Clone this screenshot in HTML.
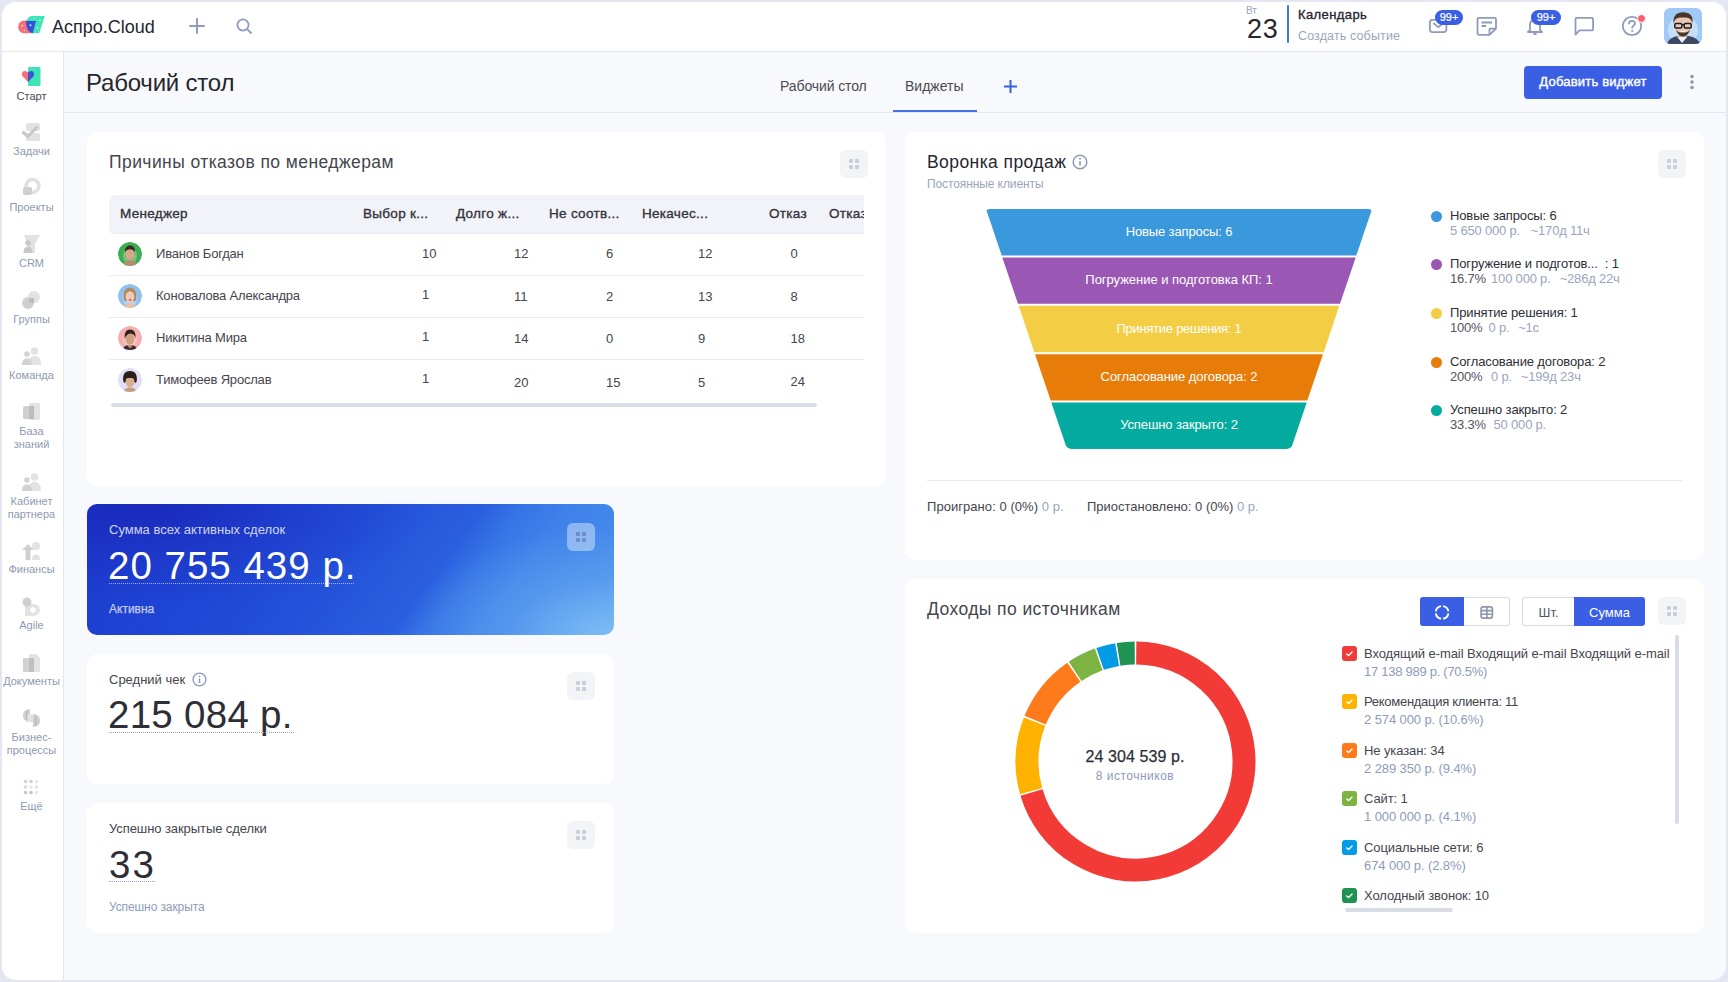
<!DOCTYPE html>
<html><head><meta charset="utf-8">
<style>
*{box-sizing:border-box;margin:0;padding:0}
html,body{width:1728px;height:982px;overflow:hidden;background:#e4e7f1;font-family:"Liberation Sans",sans-serif;color:#333}
.win{position:absolute;left:2px;top:2px;width:1724px;height:978px;border-radius:14px;background:#f8f9fc;overflow:hidden}
.abs{position:absolute}
.pg{position:absolute;left:-2px;top:-2px;width:1728px;height:982px}
.hdr{position:absolute;left:0;top:0;width:1728px;height:52px;background:#fff;border-bottom:1px solid #e3e6ef}
.side{position:absolute;left:0;top:52px;width:64px;height:930px;background:#fff;border-right:1px solid #e3e6ef}
.t{position:absolute;white-space:nowrap;line-height:1}
.card{position:absolute;background:#fff;border-radius:10px}
.drag{position:absolute;width:28px;height:28px;border-radius:6px;background:#f2f4f8}
.drag i{position:absolute;width:4px;height:4px;border-radius:1px;background:#c9cedb}
.navi{position:absolute;left:0;width:63px;text-align:center;font-size:11px;color:#8e99b3;line-height:13px}
</style></head><body>
<div class="win"><div class="pg">

<div class="hdr"></div>
<svg class="abs" style="left:15px;top:12px" width="34" height="24" viewBox="0 0 34 24">
    <path d="M9.6 8.6 H17 V21.3 H9.6 C6 21.3 3.2 18.5 3.2 15 C3.2 11.4 6 8.6 9.6 8.6 Z" fill="#f86e78"/>
    <path d="M12 9.2 C12 6 14.3 3.9 17.5 3.9 H29.8 L24.2 21.3 H17.4 Z" fill="#3ee5b8"/>
    <path d="M11 9 H21 L17.8 21.2 C13.5 20.5 11 16 11 9 Z" fill="#3251d8"/>
    <circle cx="7.2" cy="13.6" r="0.9" fill="#fff" opacity="0.8"/><circle cx="9.4" cy="18.4" r="0.7" fill="#fff" opacity="0.8"/>
    <circle cx="15.5" cy="13.3" r="1.1" fill="#fff" opacity="0.7"/><circle cx="19.4" cy="6.3" r="0.6" fill="#fff" opacity="0.8"/>
    <circle cx="24.8" cy="8.4" r="0.9" fill="#fff" opacity="0.8"/><circle cx="22.5" cy="15.9" r="0.8" fill="#fff" opacity="0.8"/>
  </svg>
<div class="t" style="left:52px;top:18.06px;font-size:18px;color:#26262e;">Аспро.Cloud</div>
<svg class="abs" style="left:189px;top:18px" width="16" height="16" viewBox="0 0 16 16"><path d="M8 1V15M1 8H15" stroke="#8e9bba" stroke-width="2" stroke-linecap="round"/></svg>
<svg class="abs" style="left:236px;top:18px" width="17" height="17" viewBox="0 0 17 17"><circle cx="7" cy="7" r="5.6" fill="none" stroke="#8e9bba" stroke-width="1.8"/><path d="M11.2 11.2L15 15" stroke="#8e9bba" stroke-width="1.8" stroke-linecap="round"/></svg>
<div class="t" style="left:1246px;top:6.04px;font-size:10px;color:#9aa5bd;">Вт</div>
<div class="t" style="left:1247px;top:16.44px;font-size:27px;color:#26262e;letter-spacing:0.8px;">23</div>
<div class="abs" style="left:1287px;top:5px;width:2px;height:38px;background:#3d7bc4;border-radius:1px"></div>
<div class="t" style="left:1298px;top:7.70px;font-size:13px;color:#26262e;letter-spacing:0.4px;-webkit-text-stroke:0.35px #26262e;">Календарь</div>
<div class="t" style="left:1298px;top:29.72px;font-size:12.5px;color:#9aa5bd;letter-spacing:0.13px;">Создать событие</div>
<svg class="abs" style="left:1428px;top:17px" width="22" height="19" viewBox="0 0 22 19"><rect x="1.9" y="2.9" width="16.5" height="12.3" rx="2.6" fill="none" stroke="#8e9bba" stroke-width="1.75"/><path d="M5.3 6 L10.3 10.2 L15 6.4" fill="none" stroke="#8e9bba" stroke-width="1.75"/></svg>
<div class="abs" style="left:1435px;top:10px;width:28px;height:15px;border-radius:8px;background:#3a5fe5;color:#fff;font-size:11px;line-height:15px;text-align:center;-webkit-text-stroke:0.2px #fff">99+</div>
<svg class="abs" style="left:1476px;top:16px" width="22" height="20" viewBox="0 0 22 20"><path d="M3 1.8 H18.5 C19.3 1.8 20 2.5 20 3.3 V12.5 L13.5 18.8 H3 C2.2 18.8 1.5 18.1 1.5 17.3 V3.3 C1.5 2.5 2.2 1.8 3 1.8 Z" fill="none" stroke="#8e9bba" stroke-width="1.8" stroke-linejoin="round"/><path d="M13.5 18.5 V13.5 C13.5 13 13.9 12.6 14.4 12.6 H19.8" fill="none" stroke="#8e9bba" stroke-width="1.8"/><path d="M5.5 6.5 H16 M5.5 10 H10" stroke="#8e9bba" stroke-width="1.8"/></svg>
<svg class="abs" style="left:1526px;top:17px" width="18" height="18" viewBox="0 0 18 18"><path d="M4 13 V8 C4 5 6 3 9 3 C12 3 14 5 14 8 V13 L16 15 H2 Z" fill="none" stroke="#8e9bba" stroke-width="1.8" stroke-linejoin="round"/><path d="M7.5 17 H10.5" stroke="#8e9bba" stroke-width="1.8"/></svg>
<div class="abs" style="left:1531px;top:10px;width:30px;height:15px;border-radius:8px;background:#3a5fe5;color:#fff;font-size:11px;line-height:15px;text-align:center;-webkit-text-stroke:0.2px #fff">99+</div>
<svg class="abs" style="left:1573px;top:16px" width="22" height="20" viewBox="0 0 22 20"><path d="M2.5 18.5 V3 C2.5 2.4 3 1.9 3.6 1.9 H19 C19.6 1.9 20.1 2.4 20.1 3 V13.3 C20.1 13.9 19.6 14.4 19 14.4 H6.5 Z" fill="none" stroke="#8e9bba" stroke-width="1.8" stroke-linejoin="round"/></svg>
<svg class="abs" style="left:1621px;top:15px" width="22" height="22" viewBox="0 0 22 22"><circle cx="11" cy="11" r="9.2" fill="none" stroke="#8e9bba" stroke-width="1.8"/><path d="M8 8.5 C8 6.8 9.3 5.8 11 5.8 C12.7 5.8 14 6.9 14 8.4 C14 10.3 11.2 10.6 11.2 12.7" fill="none" stroke="#8e9bba" stroke-width="1.8" stroke-linecap="round"/><circle cx="11.2" cy="16" r="1.1" fill="#8e9bba"/></svg>
<div class="abs" style="left:1637.3px;top:13.9px;width:9px;height:9px;border-radius:50%;background:#f7606d;border:1.6px solid #fff"></div>
<div class="abs" style="left:1664px;top:8px;width:38px;height:36px;border-radius:6px;overflow:hidden;background:#9fc9f6">
  <svg width="38" height="36" viewBox="0 0 38 36">
    <ellipse cx="19" cy="22" rx="15" ry="14" fill="#cfe4f8" opacity="0.8"/>
    <path d="M3 36 C5 30 10 28.5 15 28 L24 28 C29 28.5 34 30.5 36 36 Z" fill="#3c4862"/>
    <path d="M13 28.5 L18 35 L23.5 28.5 Z" fill="#eef2f6"/>
    <rect x="15" y="24" width="8" height="5" fill="#d9a78e"/>
    <path d="M10.5 14 C10.5 22 13.5 28.5 19 28.5 C24.5 28.5 27.5 22 27.5 14 C27.5 10 24 8 19 8 C14 8 10.5 10 10.5 14 Z" fill="#eac6b2"/>
    <path d="M12 21 C13 26 16 28.6 19 28.6 C22 28.6 25 26 26 21 C25 24 22 24.5 19 24.5 C16 24.5 13 24 12 21 Z" fill="#4b3a30"/>
    <path d="M9.5 15 C9 8 12.5 4.2 19 4.2 C25.5 4.2 29.5 7.5 28.5 15 L27.3 12.5 C26.5 10 23 9.5 19 9.5 C15 9.5 11.5 10 10.8 12.5 Z" fill="#4a3428"/>
    <rect x="10.8" y="15.4" width="7" height="4.6" rx="1.2" fill="none" stroke="#1e1e22" stroke-width="1.5"/>
    <rect x="20.2" y="15.4" width="7" height="4.6" rx="1.2" fill="none" stroke="#1e1e22" stroke-width="1.5"/>
    <path d="M17.8 16.6 H20.2" stroke="#1e1e22" stroke-width="1.2"/>
    <path d="M16.5 23 C18 23.8 20 23.8 21.5 23" stroke="#fff" stroke-width="0.9" fill="none"/>
  </svg>
</div>
<div class="side"></div>
<!-- sidebar items -->
<svg class="abs" style="left:21px;top:66px" width="20" height="20" viewBox="0 0 20 20">
  <rect x="7" y="1" width="12.5" height="19" rx="1.2" fill="#3ee3b6"/>
  <path d="M7 16 L1.8 10.6 C0.2 9 0.6 5 3.6 4.9 C5.2 4.8 6.3 5.6 7 6.6 Z" fill="#f6707a"/>
  <path d="M7 16 L12.2 10.6 C13.8 9 13.4 5 10.4 4.9 C8.8 4.8 7.7 5.6 7 6.6 Z" fill="#3a55d6"/>
</svg>
<div class="navi" style="top:90px;color:#4a4a52">Старт</div>

<svg class="abs" style="left:21px;top:122px" width="20" height="20" viewBox="0 0 20 20">
  <rect x="5" y="1" width="14" height="8" rx="2" fill="#e2e2e2"/><rect x="5" y="11" width="14" height="8" rx="2" fill="#e2e2e2"/>
  <path d="M2.5 10.5 L7 14.5 L15.5 5.5" fill="none" stroke="#c8c8c8" stroke-width="3.2" stroke-linecap="round" stroke-linejoin="round"/>
</svg>
<div class="navi" style="top:145px">Задачи</div>

<svg class="abs" style="left:21px;top:178px" width="20" height="20" viewBox="0 0 20 20">
  <circle cx="11.5" cy="8" r="6.5" fill="none" stroke="#e0e0e0" stroke-width="3.5"/>
  <rect x="2" y="9" width="9" height="8" rx="2" fill="#cfcfcf"/>
</svg>
<div class="navi" style="top:201px">Проекты</div>

<svg class="abs" style="left:21px;top:234px" width="20" height="20" viewBox="0 0 20 20">
  <path d="M3 1 H19 L14 10 V19 H6 V10 Z" fill="#e2e2e2"/>
  <circle cx="7" cy="9" r="2.7" fill="#c8c8c8"/><path d="M2.5 19 C2.5 14 4.5 12.8 7 12.8 C9.5 12.8 11.5 14 11.5 19 Z" fill="#c8c8c8"/>
</svg>
<div class="navi" style="top:257px">CRM</div>

<svg class="abs" style="left:21px;top:290px" width="20" height="20" viewBox="0 0 20 20">
  <circle cx="13" cy="7" r="6" fill="#e3e3e3"/><circle cx="7" cy="13" r="6" fill="#d0d0d0"/>
  <rect x="8" y="8" width="5" height="5" fill="#bdbdbd"/>
</svg>
<div class="navi" style="top:313px">Группы</div>

<svg class="abs" style="left:21px;top:346px" width="20" height="20" viewBox="0 0 20 20">
  <circle cx="13.5" cy="5" r="3.8" fill="#e3e3e3"/><path d="M7 19 C7 12 10 10 13.5 10 C17 10 20 12 20 19 Z" fill="#e3e3e3"/>
  <circle cx="6" cy="8" r="2.8" fill="#d2d2d2"/><path d="M1 19 C1 14 3 12.5 6 12.5 C9 12.5 11 14 11 19 Z" fill="#d2d2d2"/>
</svg>
<div class="navi" style="top:369px">Команда</div>

<svg class="abs" style="left:21px;top:402px" width="20" height="20" viewBox="0 0 20 20">
  <rect x="8" y="1" width="11" height="17" rx="1.5" fill="#e3e3e3"/><rect x="2" y="4" width="11" height="13" rx="1.5" fill="#d0d0d0"/>
  <rect x="8" y="4" width="5" height="13" fill="#bdbdbd"/>
</svg>
<div class="navi" style="top:425px">База<br>знаний</div>

<svg class="abs" style="left:21px;top:472px" width="20" height="20" viewBox="0 0 20 20">
  <circle cx="13.5" cy="5" r="3.8" fill="#e3e3e3"/><path d="M7 19 C7 12 10 10 13.5 10 C17 10 20 12 20 19 Z" fill="#e3e3e3"/>
  <circle cx="6" cy="8" r="2.8" fill="#d2d2d2"/><path d="M1 19 C1 14 3 12.5 6 12.5 C9 12.5 11 14 11 19 Z" fill="#d2d2d2"/>
</svg>
<div class="navi" style="top:495px">Кабинет<br>партнера</div>

<svg class="abs" style="left:21px;top:541px" width="20" height="20" viewBox="0 0 20 20">
  <circle cx="15" cy="5" r="4" fill="#e3e3e3"/><path d="M11 19 C11 15 12.5 13.5 15 13.5 C17.5 13.5 19 15 19 19 Z" fill="#e3e3e3"/>
  <path d="M7 3 L13 9 H9.5 V19 H4.5 V9 H1 Z" fill="#cfcfcf"/>
</svg>
<div class="navi" style="top:563px">Финансы</div>

<svg class="abs" style="left:21px;top:597px" width="20" height="20" viewBox="0 0 20 20">
  <path d="M4 7 H12 C16 7 19 9.5 19 13 C19 16.5 16 19 12 19 H4 Z" fill="#e3e3e3"/><circle cx="12" cy="13" r="2.8" fill="#fff"/>
  <circle cx="6" cy="5" r="4.5" fill="#cfcfcf"/>
</svg>
<div class="navi" style="top:619px">Agile</div>

<svg class="abs" style="left:21px;top:653px" width="20" height="20" viewBox="0 0 20 20">
  <path d="M8 1 H15 L19 5 V19 H8 Z" fill="#e3e3e3"/><rect x="2" y="5" width="11" height="14" rx="1" fill="#d2d2d2"/>
  <rect x="8" y="5" width="5" height="14" fill="#bfbfbf"/>
</svg>
<div class="navi" style="top:675px">Документы</div>

<svg class="abs" style="left:21px;top:708px" width="20" height="20" viewBox="0 0 20 20">
  <path d="M9 1 C4 1 2 4 2 7.5 C2 11 4 14 9 14 Z" fill="#d0d0d0"/>
  <rect x="6" y="6" width="9" height="8" rx="3" fill="#e3e3e3"/>
  <path d="M12 6 C17 6 19 9 19 12.5 C19 16 17 19 12 19 Z" fill="#cfcfcf"/>
  <rect x="5" y="3" width="1.3" height="9" fill="#b9b9b9"/><rect x="14" y="8" width="1.3" height="9" fill="#b9b9b9"/>
</svg>
<div class="navi" style="top:731px">Бизнес-<br>процессы</div>

<svg class="abs" style="left:23px;top:779px" width="16" height="16" viewBox="0 0 16 16">
  <circle cx="2.5" cy="2.5" r="1.8" fill="#d4d4d4"/><circle cx="8" cy="2.5" r="1.8" fill="#cfcfcf"/><circle cx="13.5" cy="2.5" r="1.8" fill="#e6e6e6"/>
  <circle cx="2.5" cy="8" r="1.8" fill="#d8d8d8"/><circle cx="8" cy="8" r="1.8" fill="#e6e6e6"/><circle cx="13.5" cy="8" r="1.8" fill="#e2e2e2"/>
  <circle cx="2.5" cy="13.5" r="1.8" fill="#c4c4c4"/><circle cx="8" cy="13.5" r="1.8" fill="#c4c4c4"/><circle cx="13.5" cy="13.5" r="1.8" fill="#e6e6e6"/>
</svg>
<div class="navi" style="top:800px">Ещё</div>


<div class="abs" style="left:64px;top:112px;width:1664px;height:1px;background:#e3e6ef"></div>
<div class="t" style="left:86px;top:70.78px;font-size:24px;color:#26262e;letter-spacing:-0.2px;">Рабочий стол</div>
<div class="t" style="left:780px;top:79.35px;font-size:14px;color:#4a4a52;letter-spacing:-0.1px;">Рабочий стол</div>
<div class="t" style="left:905px;top:79.35px;font-size:14px;color:#4a4a52;">Виджеты</div>
<div class="abs" style="left:893px;top:110px;width:84px;height:2px;background:#4a6fe6"></div>
<svg class="abs" style="left:1003px;top:79px" width="15" height="15" viewBox="0 0 15 15"><path d="M7.5 1V14M1 7.5H14" stroke="#3a5fe5" stroke-width="2"/></svg>
<div class="abs" style="left:1524px;top:66px;width:138px;height:33px;border-radius:4px;background:#3a5fe5"></div>
<div class="t" style="left:1524px;top:75.00px;font-size:13px;color:#fff;letter-spacing:0.2px;width:138px;text-align:center;-webkit-text-stroke:0.4px #fff;">Добавить виджет</div>
<svg class="abs" style="left:1688px;top:74px" width="8" height="16" viewBox="0 0 8 16"><circle cx="4" cy="2.5" r="1.8" fill="#8e97ab"/><circle cx="4" cy="8" r="1.8" fill="#8e97ab"/><circle cx="4" cy="13.5" r="1.8" fill="#8e97ab"/></svg>
<div class="card" style="left:87px;top:132px;width:799px;height:354px"></div>
<div class="t" style="left:109px;top:154.09px;font-size:17.5px;color:#45454d;letter-spacing:0.42px;">Причины отказов по менеджерам</div>
<div class="drag" style="left:840px;top:150px;"><i style="left:9px;top:9px;"></i><i style="left:15px;top:9px;"></i><i style="left:9px;top:15px;"></i><i style="left:15px;top:15px;"></i></div>
<div class="abs" style="left:109px;top:195px;width:755px;height:39px;background:#f2f3f8;border-radius:6px 0 0 6px;border-bottom:1px solid #eaecf3"></div>
<div class="t" style="left:120px;top:206.67px;font-size:13.5px;color:#33333b;letter-spacing:0.3px;-webkit-text-stroke:0.35px #33333b;">Менеджер</div>
<div class="t" style="left:363px;top:206.67px;font-size:13.5px;color:#33333b;letter-spacing:0.3px;-webkit-text-stroke:0.35px #33333b;">Выбор к...</div>
<div class="t" style="left:456px;top:206.67px;font-size:13.5px;color:#33333b;letter-spacing:0.3px;-webkit-text-stroke:0.35px #33333b;">Долго ж...</div>
<div class="t" style="left:549px;top:206.67px;font-size:13.5px;color:#33333b;letter-spacing:0.3px;-webkit-text-stroke:0.35px #33333b;">Не соотв...</div>
<div class="t" style="left:642px;top:206.67px;font-size:13.5px;color:#33333b;letter-spacing:0.3px;-webkit-text-stroke:0.35px #33333b;">Некачес...</div>
<div class="t" style="left:769px;top:206.67px;font-size:13.5px;color:#33333b;letter-spacing:0.3px;-webkit-text-stroke:0.35px #33333b;">Отказ</div>
<div class="abs" style="left:829px;top:195px;width:35px;height:38px;overflow:hidden">
<div class="t" style="left:0px;top:11.67px;font-size:13.5px;color:#33333b;letter-spacing:0.3px;-webkit-text-stroke:0.35px #33333b;">Отказ</div>
</div>
<div class="abs" style="left:109px;top:275px;width:755px;height:1px;background:#e6e9f1"></div>
<div class="abs" style="left:109px;top:317px;width:755px;height:1px;background:#e6e9f1"></div>
<div class="abs" style="left:109px;top:359px;width:755px;height:1px;background:#e6e9f1"></div>
<div class="abs" style="left:111px;top:403px;width:706px;height:4px;border-radius:2px;background:#d9dde7"></div>
<svg class="abs" style="left:118px;top:242px" width="24" height="24" viewBox="0 0 24 24"><clipPath id="av0"><circle cx="12" cy="12" r="12"/></clipPath><g clip-path="url(#av0)"><circle cx="12" cy="12" r="12" fill="#3aae52"/><ellipse cx="12" cy="14" rx="7" ry="9" fill="#8fd39c" opacity="0.6"/><path d="M5 24 C6 19.5 8.5 18.5 12 18.5 C15.5 18.5 18 19.5 19 24 Z" fill="#b98b70"/><ellipse cx="11.8" cy="12.2" rx="4.6" ry="6" fill="#d6a887"/><path d="M7 10.5 C6.6 5.8 9 3.6 12 3.6 C15.2 3.6 17.4 5.8 16.8 10.5 C16 8 14 7.2 12 7.2 C10 7.2 7.8 8 7 10.5 Z" fill="#3a2a22"/></g></svg>
<div class="t" style="left:156px;top:246.50px;font-size:13px;color:#45454d;letter-spacing:-0.2px;">Иванов Богдан</div>
<svg class="abs" style="left:118px;top:284px" width="24" height="24" viewBox="0 0 24 24"><clipPath id="av1"><circle cx="12" cy="12" r="12"/></clipPath><g clip-path="url(#av1)"><circle cx="12" cy="12" r="12" fill="#90c2f0"/><ellipse cx="12" cy="14" rx="7" ry="9" fill="#cfe3f7" opacity="0.6"/><path d="M5.5 24 C6.5 20 9 19 12 19 C15 19 17.5 20 18.5 24 Z" fill="#e6c2ad"/><path d="M5.8 14 C5 7 8 3.4 12 3.4 C16 3.4 19 7 18.2 14 C18 17 16.5 18 15.5 17 L8.5 17 C7.5 18 6 17 5.8 14 Z" fill="#b08a62"/><ellipse cx="12" cy="12.8" rx="4.3" ry="5.6" fill="#efcbb8"/><ellipse cx="12.2" cy="16" rx="1.6" ry="0.9" fill="#f25c6e"/></g></svg>
<div class="t" style="left:156px;top:288.50px;font-size:13px;color:#45454d;letter-spacing:-0.2px;">Коновалова Александра</div>
<svg class="abs" style="left:118px;top:326px" width="24" height="24" viewBox="0 0 24 24"><clipPath id="av2"><circle cx="12" cy="12" r="12"/></clipPath><g clip-path="url(#av2)"><circle cx="12" cy="12" r="12" fill="#f6aeb0"/><ellipse cx="12" cy="14" rx="7" ry="9" fill="#fbd2d2" opacity="0.5"/><path d="M4.5 24 C5.5 20 8.5 19 12 19 C15.5 19 18.5 20 19.5 24 Z" fill="#3a2e36"/><path d="M9 19 L12 22.5 L15 19 Z" fill="#c49274"/><ellipse cx="12" cy="12.8" rx="4.4" ry="5.8" fill="#cf9f82"/><path d="M6.8 13 C6 6.5 8.5 3.4 12 3.4 C15.8 3.4 18.2 6.5 17.4 12 C16.6 9 15.5 7.8 12.5 7.4 C9.5 7.8 7.6 9.5 6.8 13 Z" fill="#2e221c"/></g></svg>
<div class="t" style="left:156px;top:330.50px;font-size:13px;color:#45454d;letter-spacing:-0.2px;">Никитина Мира</div>
<svg class="abs" style="left:118px;top:368px" width="24" height="24" viewBox="0 0 24 24"><clipPath id="av3"><circle cx="12" cy="12" r="12"/></clipPath><g clip-path="url(#av3)"><circle cx="12" cy="12" r="12" fill="#e2ddf8"/><path d="M5.5 24 C6.5 20.5 9 19.5 12 19.5 C15 19.5 17.5 20.5 18.5 24 Z" fill="#c89c80"/><path d="M5.2 12.5 C4.5 6 7.5 3 12 3 C16.5 3 19.5 6 18.8 12.5 C18.5 15 17 15.5 16.5 14 L7.5 14 C7 15.5 5.5 15 5.2 12.5 Z" fill="#2a1e18"/><ellipse cx="12" cy="13.5" rx="4.4" ry="5.6" fill="#d9ae92"/><path d="M7.6 11 C8.5 8 10 7.5 12 7.5 C14 7.5 15.5 8 16.4 11 C15 9.8 9 9.8 7.6 11 Z" fill="#2a1e18"/></g></svg>
<div class="t" style="left:156px;top:372.50px;font-size:13px;color:#45454d;letter-spacing:-0.2px;">Тимофеев Ярослав</div>
<div class="t" style="left:422px;top:246.60px;font-size:13px;color:#45454d;">10</div>
<div class="t" style="left:514px;top:246.60px;font-size:13px;color:#45454d;">12</div>
<div class="t" style="left:606px;top:246.60px;font-size:13px;color:#45454d;">6</div>
<div class="t" style="left:698px;top:246.60px;font-size:13px;color:#45454d;">12</div>
<div class="t" style="left:790.5px;top:246.60px;font-size:13px;color:#45454d;">0</div>
<div class="t" style="left:422px;top:287.60px;font-size:13px;color:#45454d;">1</div>
<div class="t" style="left:514px;top:290.10px;font-size:13px;color:#45454d;">11</div>
<div class="t" style="left:606px;top:290.10px;font-size:13px;color:#45454d;">2</div>
<div class="t" style="left:698px;top:290.10px;font-size:13px;color:#45454d;">13</div>
<div class="t" style="left:790.5px;top:290.10px;font-size:13px;color:#45454d;">8</div>
<div class="t" style="left:422px;top:329.60px;font-size:13px;color:#45454d;">1</div>
<div class="t" style="left:514px;top:332.10px;font-size:13px;color:#45454d;">14</div>
<div class="t" style="left:606px;top:332.10px;font-size:13px;color:#45454d;">0</div>
<div class="t" style="left:698px;top:332.10px;font-size:13px;color:#45454d;">9</div>
<div class="t" style="left:790.5px;top:332.10px;font-size:13px;color:#45454d;">18</div>
<div class="t" style="left:422px;top:371.60px;font-size:13px;color:#45454d;">1</div>
<div class="t" style="left:514px;top:376.10px;font-size:13px;color:#45454d;">20</div>
<div class="t" style="left:606px;top:376.10px;font-size:13px;color:#45454d;">15</div>
<div class="t" style="left:698px;top:376.10px;font-size:13px;color:#45454d;">5</div>
<div class="t" style="left:790.5px;top:374.60px;font-size:13px;color:#45454d;">24</div>
<div class="card" style="left:87px;top:504px;width:527px;height:131px;overflow:hidden;background:radial-gradient(ellipse 210px 110px at 100% 100%,rgba(125,190,245,1) 0%,rgba(125,190,245,0.32) 50%,rgba(125,190,245,0) 100%),radial-gradient(ellipse 280px 100px at 12% 0%,rgba(24,30,176,0.65) 0%,rgba(24,30,176,0.25) 50%,rgba(24,30,176,0) 100%),linear-gradient(126deg,#1c3acd 0%,#1f46d5 28%,#2350d9 46%,#2a5fdf 64%,#3574e5 70%,#3e82ea 78%,#4a90ec 100%)"></div>
<div class="t" style="left:109px;top:522.90px;font-size:13px;color:rgba(255,255,255,0.8);">Сумма всех активных сделок</div>
<div class="t" style="left:108px;top:546.51px;font-size:38.5px;color:#fff;letter-spacing:1.0px;">20 755 439 р.</div>
<div class="abs" style="left:109px;top:583px;width:245px;height:0;border-top:1px dotted rgba(255,255,255,0.6)"></div>
<div class="t" style="left:109px;top:602.84px;font-size:12px;color:rgba(255,255,255,0.68);-webkit-text-stroke:0.25px rgba(255,255,255,0.68);">Активна</div>
<div class="drag" style="left:567px;top:523px;background:rgba(255,255,255,0.4);"><i style="left:9px;top:9px;background:#6f8cc8"></i><i style="left:15px;top:9px;background:#6f8cc8"></i><i style="left:9px;top:15px;background:#6f8cc8"></i><i style="left:15px;top:15px;background:#6f8cc8"></i></div>
<div class="card" style="left:87px;top:654px;width:527px;height:130px"></div>
<div class="t" style="left:109px;top:672.70px;font-size:13px;color:#45454d;">Средний чек</div>
<svg class="abs" style="left:192px;top:672px" width="15" height="15" viewBox="0 0 15 15"><circle cx="7.5" cy="7.5" r="6.4" fill="none" stroke="#8e9bba" stroke-width="1.4"/><path d="M7.5 6.5V11" stroke="#8e9bba" stroke-width="1.5"/><circle cx="7.5" cy="4.3" r="0.9" fill="#8e9bba"/></svg>
<div class="t" style="left:108px;top:695.51px;font-size:38.5px;color:#2e2e36;letter-spacing:0.27px;">215 084 р.</div>
<div class="abs" style="left:109px;top:732px;width:185px;height:0;border-top:1px dotted #9aa5bd"></div>
<div class="drag" style="left:567px;top:672px;"><i style="left:9px;top:9px;"></i><i style="left:15px;top:9px;"></i><i style="left:9px;top:15px;"></i><i style="left:15px;top:15px;"></i></div>
<div class="card" style="left:87px;top:803px;width:527px;height:130px"></div>
<div class="t" style="left:109px;top:822.00px;font-size:13px;color:#45454d;letter-spacing:-0.08px;">Успешно закрытые сделки</div>
<div class="t" style="left:109px;top:845.61px;font-size:38.5px;color:#2e2e36;letter-spacing:2px;">33</div>
<div class="abs" style="left:109px;top:881px;width:46px;height:0;border-top:1px dotted #9aa5bd"></div>
<div class="t" style="left:109px;top:901.34px;font-size:12px;color:#8e9bba;letter-spacing:-0.1px;">Успешно закрыта</div>
<div class="drag" style="left:567px;top:821px;"><i style="left:9px;top:9px;"></i><i style="left:15px;top:9px;"></i><i style="left:9px;top:15px;"></i><i style="left:15px;top:15px;"></i></div>
<div class="card" style="left:905px;top:132px;width:799px;height:428px"></div>
<div class="t" style="left:927px;top:154.39px;font-size:17.5px;color:#26262e;letter-spacing:0.42px;">Воронка продаж</div>
<svg class="abs" style="left:1072px;top:154px" width="16" height="16" viewBox="0 0 16 16"><circle cx="8" cy="8" r="6.8" fill="none" stroke="#8e9bba" stroke-width="1.5"/><path d="M8 7V11.5" stroke="#8e9bba" stroke-width="1.6"/><circle cx="8" cy="4.7" r="1" fill="#8e9bba"/></svg>
<div class="t" style="left:927px;top:178.14px;font-size:12px;color:#9aa5bd;letter-spacing:-0.1px;">Постоянные клиенты</div>
<div class="drag" style="left:1658px;top:150px;"><i style="left:9px;top:9px;"></i><i style="left:15px;top:9px;"></i><i style="left:9px;top:15px;"></i><i style="left:15px;top:15px;"></i></div>
<svg class="abs" style="left:980px;top:205px" width="400" height="250" viewBox="980 205 400 250">
<path d="M990.0 209.0 L1368.0 209.0 Q1373.0 209.0 1370.7 213.0 L1356.3 255.4 L1001.7 255.4 L987.4 213.0 Q985.0 209.0 990.0 209.0 Z" fill="#3a98dc"/>
<path d="M1002.3 257.4 L1355.7 257.4 L1340.0 303.8 L1018.0 303.8 Z" fill="#9a57b4"/>
<path d="M1018.7 305.8 L1339.3 305.8 L1323.7 352.2 L1034.3 352.2 Z" fill="#f3cd44"/>
<path d="M1035.0 354.2 L1323.0 354.2 L1307.3 400.6 L1050.7 400.6 Z" fill="#e77c08"/>
<path d="M1051.3 402.6 L1306.7 402.6 L1292.0 446.0 Q1290.0 449.0 1287.0 449.0 L1071.0 449.0 Q1068.0 449.0 1066.0 446.0 Z" fill="#06ab9f"/>
</svg>
<div class="t" style="left:979px;top:224.80px;font-size:13px;color:#fff;letter-spacing:-0.13px;width:400px;text-align:center;">Новые запросы: 6</div>
<div class="t" style="left:979px;top:273.20px;font-size:13px;color:#fff;letter-spacing:-0.03px;width:400px;text-align:center;">Погружение и подготовка КП: 1</div>
<div class="t" style="left:979px;top:321.60px;font-size:13px;color:#fff;letter-spacing:-0.27px;width:400px;text-align:center;">Принятие решения: 1</div>
<div class="t" style="left:979px;top:370.00px;font-size:13px;color:#fff;letter-spacing:-0.07px;width:400px;text-align:center;">Согласование договора: 2</div>
<div class="t" style="left:979px;top:418.40px;font-size:13px;color:#fff;letter-spacing:-0.11px;width:400px;text-align:center;">Успешно закрыто: 2</div>
<div class="abs" style="left:1431px;top:210.7px;width:11px;height:11px;border-radius:50%;background:#3a98dc"></div>
<div class="t" style="left:1450px;top:208.80px;font-size:13px;color:#2e2e36;letter-spacing:-0.13px;">Новые запросы: 6</div>
<div class="t" style="left:1450px;top:223.80px;font-size:13px;color:#9aa5bd;letter-spacing:-0.2px;">5 650 000 р.</div>
<div class="t" style="left:1530.7px;top:223.80px;font-size:13px;color:#9aa5bd;letter-spacing:-0.2px;">~170д 11ч</div>
<div class="abs" style="left:1431px;top:259.3px;width:11px;height:11px;border-radius:50%;background:#9a57b4"></div>
<div class="t" style="left:1450px;top:257.40px;font-size:13px;color:#2e2e36;letter-spacing:-0.13px;">Погружение и подготов...&nbsp;&nbsp;: 1</div>
<div class="t" style="left:1450px;top:272.40px;font-size:13px;color:#55555d;letter-spacing:-0.2px;">16.7%</div>
<div class="t" style="left:1491.1px;top:272.40px;font-size:13px;color:#9aa5bd;letter-spacing:-0.2px;">100 000 р.</div>
<div class="t" style="left:1559.7px;top:272.40px;font-size:13px;color:#9aa5bd;letter-spacing:-0.2px;">~286д 22ч</div>
<div class="abs" style="left:1431px;top:307.9px;width:11px;height:11px;border-radius:50%;background:#f3cd44"></div>
<div class="t" style="left:1450px;top:306.00px;font-size:13px;color:#2e2e36;letter-spacing:-0.13px;">Принятие решения: 1</div>
<div class="t" style="left:1450px;top:321.00px;font-size:13px;color:#55555d;letter-spacing:-0.2px;">100%</div>
<div class="t" style="left:1488.6px;top:321.00px;font-size:13px;color:#9aa5bd;letter-spacing:-0.2px;">0 р.</div>
<div class="t" style="left:1518.2px;top:321.00px;font-size:13px;color:#9aa5bd;letter-spacing:-0.2px;">~1с</div>
<div class="abs" style="left:1431px;top:356.5px;width:11px;height:11px;border-radius:50%;background:#e77c08"></div>
<div class="t" style="left:1450px;top:354.60px;font-size:13px;color:#2e2e36;letter-spacing:-0.13px;">Согласование договора: 2</div>
<div class="t" style="left:1450px;top:369.60px;font-size:13px;color:#55555d;letter-spacing:-0.2px;">200%</div>
<div class="t" style="left:1491.1px;top:369.60px;font-size:13px;color:#9aa5bd;letter-spacing:-0.2px;">0 р.</div>
<div class="t" style="left:1520.8px;top:369.60px;font-size:13px;color:#9aa5bd;letter-spacing:-0.2px;">~199д 23ч</div>
<div class="abs" style="left:1431px;top:405.1px;width:11px;height:11px;border-radius:50%;background:#06ab9f"></div>
<div class="t" style="left:1450px;top:403.20px;font-size:13px;color:#2e2e36;letter-spacing:-0.13px;">Успешно закрыто: 2</div>
<div class="t" style="left:1450px;top:418.20px;font-size:13px;color:#55555d;letter-spacing:-0.2px;">33.3%</div>
<div class="t" style="left:1493.6px;top:418.20px;font-size:13px;color:#9aa5bd;letter-spacing:-0.2px;">50 000 р.</div>
<div class="abs" style="left:927px;top:480px;width:755px;height:1px;background:#e6e9f1"></div>
<div class="t" style="left:927px;top:500.00px;font-size:13px;color:#45454d;letter-spacing:0.05px;">Проиграно: 0 (0%) <span style="color:#9aa5bd">0 р.</span></div>
<div class="t" style="left:1087px;top:500.00px;font-size:13px;color:#45454d;">Приостановлено: 0 (0%) <span style="color:#9aa5bd">0 р.</span></div>
<div class="card" style="left:905px;top:579px;width:799px;height:354px;overflow:hidden"></div>
<div class="t" style="left:927px;top:601.19px;font-size:17.5px;color:#45454d;letter-spacing:0.42px;">Доходы по источникам</div>
<div class="abs" style="left:1420px;top:597px;width:45px;height:29px;background:#3a5fe5;border-radius:3px 0 0 3px"></div>
<svg class="abs" style="left:1434px;top:604px" width="16" height="16" viewBox="0 0 16 16"><path d="M14.42 9.40A6.4 6.4 0 0 1 9.10 14.72M7.10 14.72A6.4 6.4 0 0 1 1.78 9.40M1.78 7.40A6.4 6.4 0 0 1 7.10 2.08M9.10 2.08A6.4 6.4 0 0 1 14.42 7.40" fill="none" stroke="#fff" stroke-width="1.9" stroke-linecap="butt"/></svg>
<div class="abs" style="left:1464px;top:597px;width:46px;height:29px;border:1px solid #d8dce6;border-left:0;border-radius:0 3px 3px 0;background:#fff"></div>
<svg class="abs" style="left:1479px;top:605px" width="16" height="15" viewBox="0 0 16 15"><rect x="2.1" y="1.9" width="11.3" height="11.2" rx="2" fill="none" stroke="#8e97ab" stroke-width="1.7"/><path d="M2 5.6H13.5M2 9.3H13.5M7.9 2V13" stroke="#8e97ab" stroke-width="1.6"/></svg>
<div class="abs" style="left:1522px;top:597px;width:53px;height:29px;border:1px solid #d8dce6;border-right:0;border-radius:3px 0 0 3px;background:#fff"></div>
<div class="abs" style="left:1574px;top:597px;width:71px;height:29px;background:#3a5fe5;border-radius:0 3px 3px 0"></div>
<div class="t" style="left:1522px;top:605.50px;font-size:13px;color:#55555d;width:53px;text-align:center;">Шт.</div>
<div class="t" style="left:1574px;top:605.50px;font-size:13px;color:#fff;width:71px;text-align:center;">Сумма</div>
<div class="drag" style="left:1658px;top:597px;"><i style="left:9px;top:9px;"></i><i style="left:15px;top:9px;"></i><i style="left:9px;top:15px;"></i><i style="left:15px;top:15px;"></i></div>
<svg class="abs" style="left:1005px;top:631px" width="261" height="261" viewBox="0 0 261 261">
<path d="M131.26 22.00 A108.5 108.5 0 1 1 26.52 161.50" fill="none" stroke="#f23b36" stroke-width="23"/>
<path d="M26.10 160.04 A108.5 108.5 0 0 1 29.59 90.63" fill="none" stroke="#ffb300" stroke-width="23"/>
<path d="M30.16 89.22 A108.5 108.5 0 0 1 68.89 41.19" fill="none" stroke="#ff7a1a" stroke-width="23"/>
<path d="M70.14 40.34 A108.5 108.5 0 0 1 93.68 28.44" fill="none" stroke="#7cb342" stroke-width="23"/>
<path d="M95.10 27.94 A108.5 108.5 0 0 1 112.11 23.57" fill="none" stroke="#039be5" stroke-width="23"/>
<path d="M113.60 23.32 A108.5 108.5 0 0 1 129.74 22.00" fill="none" stroke="#1f9452" stroke-width="23"/>
</svg>
<div class="t" style="left:1035px;top:748.76px;font-size:16px;color:#2e2e36;letter-spacing:0.1px;width:200px;text-align:center;-webkit-text-stroke:0.25px #2e2e36;">24 304 539 р.</div>
<div class="t" style="left:1035px;top:770.34px;font-size:12px;color:#8e9bba;letter-spacing:0.5px;width:200px;text-align:center;">8 источников</div>
<div class="abs" style="left:1342px;top:645.5px;width:15px;height:15px;border-radius:3px;background:#f03c3c"><svg width="15" height="15" viewBox="0 0 15 15" style="position:absolute;left:0;top:0"><path d="M4.7 7.9 L6.6 9.6 L10.1 6.1" fill="none" stroke="#fff" stroke-width="1.35" stroke-linecap="round" stroke-linejoin="round"/></svg></div>
<div class="t" style="left:1364px;top:646.60px;font-size:13px;color:#45454d;letter-spacing:-0.08px;">Входящий e-mail Входящий e-mail Входящий e-mail</div>
<div class="t" style="left:1364px;top:664.80px;font-size:13px;color:#8e9bba;letter-spacing:-0.27px;">17 138 989 р. (70.5%)</div>
<div class="abs" style="left:1342px;top:694.0px;width:15px;height:15px;border-radius:3px;background:#ffb300"><svg width="15" height="15" viewBox="0 0 15 15" style="position:absolute;left:0;top:0"><path d="M4.7 7.9 L6.6 9.6 L10.1 6.1" fill="none" stroke="#fff" stroke-width="1.35" stroke-linecap="round" stroke-linejoin="round"/></svg></div>
<div class="t" style="left:1364px;top:695.10px;font-size:13px;color:#45454d;letter-spacing:-0.28px;">Рекомендация клиента: 11</div>
<div class="t" style="left:1364px;top:713.30px;font-size:13px;color:#8e9bba;letter-spacing:-0.1px;">2 574 000 р. (10.6%)</div>
<div class="abs" style="left:1342px;top:742.5px;width:15px;height:15px;border-radius:3px;background:#ff7a1a"><svg width="15" height="15" viewBox="0 0 15 15" style="position:absolute;left:0;top:0"><path d="M4.7 7.9 L6.6 9.6 L10.1 6.1" fill="none" stroke="#fff" stroke-width="1.35" stroke-linecap="round" stroke-linejoin="round"/></svg></div>
<div class="t" style="left:1364px;top:743.60px;font-size:13px;color:#45454d;letter-spacing:-0.1px;">Не указан: 34</div>
<div class="t" style="left:1364px;top:761.80px;font-size:13px;color:#8e9bba;letter-spacing:-0.1px;">2 289 350 р. (9.4%)</div>
<div class="abs" style="left:1342px;top:791.0px;width:15px;height:15px;border-radius:3px;background:#7cb342"><svg width="15" height="15" viewBox="0 0 15 15" style="position:absolute;left:0;top:0"><path d="M4.7 7.9 L6.6 9.6 L10.1 6.1" fill="none" stroke="#fff" stroke-width="1.35" stroke-linecap="round" stroke-linejoin="round"/></svg></div>
<div class="t" style="left:1364px;top:792.10px;font-size:13px;color:#45454d;letter-spacing:-0.1px;">Сайт: 1</div>
<div class="t" style="left:1364px;top:810.30px;font-size:13px;color:#8e9bba;letter-spacing:-0.1px;">1 000 000 р. (4.1%)</div>
<div class="abs" style="left:1342px;top:839.5px;width:15px;height:15px;border-radius:3px;background:#039be5"><svg width="15" height="15" viewBox="0 0 15 15" style="position:absolute;left:0;top:0"><path d="M4.7 7.9 L6.6 9.6 L10.1 6.1" fill="none" stroke="#fff" stroke-width="1.35" stroke-linecap="round" stroke-linejoin="round"/></svg></div>
<div class="t" style="left:1364px;top:840.60px;font-size:13px;color:#45454d;letter-spacing:-0.1px;">Социальные сети: 6</div>
<div class="t" style="left:1364px;top:858.80px;font-size:13px;color:#8e9bba;letter-spacing:-0.1px;">674 000 р. (2.8%)</div>
<div class="abs" style="left:1342px;top:888.0px;width:15px;height:15px;border-radius:3px;background:#1f9452"><svg width="15" height="15" viewBox="0 0 15 15" style="position:absolute;left:0;top:0"><path d="M4.7 7.9 L6.6 9.6 L10.1 6.1" fill="none" stroke="#fff" stroke-width="1.35" stroke-linecap="round" stroke-linejoin="round"/></svg></div>
<div class="t" style="left:1364px;top:889.10px;font-size:13px;color:#45454d;letter-spacing:-0.1px;">Холодный звонок: 10</div>
<div class="abs" style="left:1675px;top:635px;width:4px;height:189px;border-radius:2px;background:#d8dce6"></div>
<div class="abs" style="left:1345px;top:908px;width:108px;height:4px;border-radius:2px;background:#d8dce6"></div>
</div></div>
</body></html>
